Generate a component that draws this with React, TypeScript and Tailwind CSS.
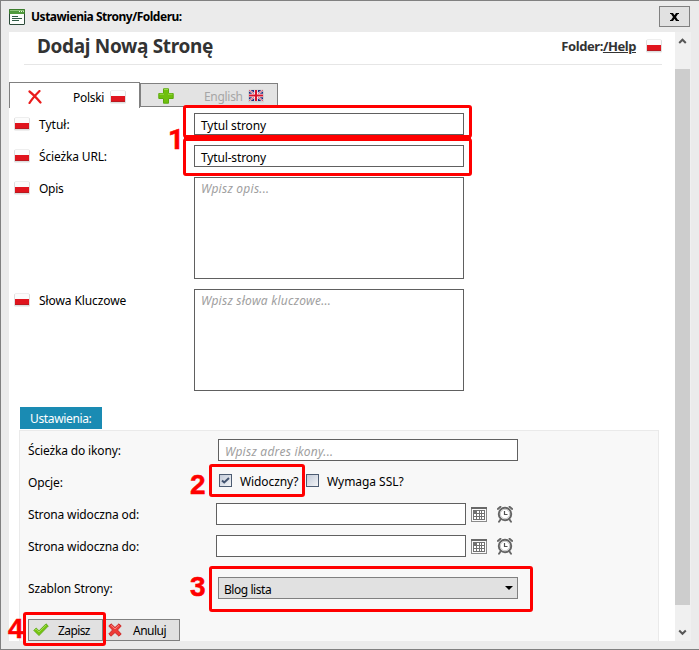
import React from 'react';
import clsx from 'clsx';

const PolishFlag: React.FC<{ className?: string }> = ({ className }) => (
  <svg width="16" height="14" viewBox="0 0 16 14" className={clsx('shrink-0', className)}>
    <rect x="0" y="0.5" width="16" height="13" rx="1.5" fill="#dedede" />
    <rect x="1" y="1" width="14" height="6" rx="0.5" fill="#fcfcfc" />
    <rect x="1" y="6" width="14" height="6" fill="#e0141d" />
    <rect x="1" y="11" width="14" height="1" fill="#b81a20" />
  </svg>
);

const BritishFlag: React.FC = () => (
  <svg width="16" height="14" viewBox="0 0 16 14" className="shrink-0">
    <rect x="0" y="0.5" width="16" height="13" rx="1.5" fill="#cfcfcf" />
    <rect x="1" y="1" width="14" height="11" fill="#1f2d7c" />
    <path d="M1 1 L15 12 M15 1 L1 12" stroke="#f4f0f4" strokeWidth="2" />
    <path d="M1 1 L15 12 M15 1 L1 12" stroke="#d0263c" strokeWidth="0.8" />
    <path d="M8 1 V12 M1 6.5 H15" stroke="#fff" strokeWidth="3.6" />
    <path d="M8 1 V12 M1 6.5 H15" stroke="#d8142c" strokeWidth="2" />
  </svg>
);

const WindowIcon: React.FC = () => (
  <svg width="16" height="16" viewBox="0 0 16 16" className="shrink-0">
    <rect x="0.5" y="0.5" width="15" height="15" rx="0.5" fill="#fbfdfb" stroke="#2b4a38" />
    <path d="M.5 5V.500h15V5" fill="none" stroke="#3c7d2c" />
    <rect x="1" y="1" width="14" height="4" fill="#4f9a3c" />
    <rect x="1" y="1" width="14" height="1" fill="#8cc47a" />
    <path d="M10 2.5h1M12 2.5h1M14 2.5h.8" stroke="#e8f6e2" />
    <path d="M3 7.5h6M3 9.500h10M3 11.500h7" stroke="#2f5b45" />
  </svg>
);

const RedCross: React.FC = () => (
  <svg width="14" height="14" viewBox="0 0 14 14" className="shrink-0">
    <path d="M1.500 1.500C5 4 9 8.500 12.500 12.500M11.500 1C8 4.500 4 9 1.500 13" fill="none" stroke="#ea1b1b" strokeWidth="2.2" strokeLinecap="round" />
  </svg>
);

const GreenPlus: React.FC = () => (
  <svg width="16" height="16" viewBox="0 0 16 16" className="shrink-0">
    <path d="M5.500 .8h5v4.700h4.700v5h-4.700v4.700h-5v-4.700H.8v-5h4.700z" fill="#6fc00e" stroke="#5ca80e" strokeLinejoin="round" />
    <path d="M6 1.500h4M1.500 6.200h4.500M10 6.200h4.500" stroke="#98da49" />
  </svg>
);

const CheckIcon: React.FC = () => (
  <svg width="16" height="14" viewBox="0 0 16 14" className="shrink-0">
    <path d="M.8 7.400 3.200 5 6 7.800 13 .8 15.300 3 6 12.600z" fill="#76c510" stroke="#58a318" strokeWidth=".8" strokeLinejoin="round" />
    <path d="M2 7.200 3.200 6 6 9 13 2" fill="none" stroke="#a6df5b" strokeWidth=".9" />
  </svg>
);

const CancelIcon: React.FC = () => (
  <svg width="14" height="14" viewBox="0 0 14 14" className="shrink-0">
    <path d="M3 .8 7 4.500 11 .8 13.200 3 9.500 7l3.700 4-2.200 2.200L7 9.500l-4 3.700L.8 11l3.700-4L.8 3z" fill="#ee3b37" stroke="#c8201f" strokeWidth=".9" strokeLinejoin="round" />
    <path d="M3 2.200 7 6l4-3.800" fill="none" stroke="#f98b86" strokeWidth=".9" />
  </svg>
);

const CalendarIcon: React.FC = () => (
  <svg width="16" height="16" viewBox="0 0 16 16" className="shrink-0">
    <rect x="0.500" y="2.500" width="15" height="13" fill="#fafafa" stroke="#8a8a8a" />
    <rect x="0" y="1" width="16" height="2" fill="#686868" />
    <rect x="2" y="4" width="12" height="10" fill="#717171" />
    <path d="M6 6h2M9 6h1M11 6h2M3 9h2M6 9h2M9 9h1M11 9h2M3 12h2M6 12h2M9 12h1M11 12h2" stroke="#fff" strokeWidth="2" />
  </svg>
);

const AlarmIcon: React.FC = () => (
  <svg width="16" height="17" viewBox="0 0 16 17" className="block shrink-0">
    <path d="M.8 3 3.500 .8M12.500 .8l2.700 2.200M3.500 13.500l-1.500 2.200M12.500 13.500l1.500 2.200" stroke="#666" strokeWidth="1.900" strokeLinecap="round" />
    <circle cx="8" cy="8" r="6.200" fill="#fff" stroke="#656565" strokeWidth="2" />
    <circle cx="8" cy="8" r="4.700" fill="none" stroke="#c4c4c4" strokeWidth="1" />
    <path d="M7.500 5v3.500h3" fill="none" stroke="#505050" strokeWidth="1.200" />
  </svg>
);

const ScrollArrow: React.FC<{ down?: boolean }> = ({ down }) => (
  <svg width="15" height="17" viewBox="0 0 15 17" className="block">
    <path d={down ? 'M4.200 6.500 7.500 9.800 10.800 6.500' : 'M4.200 11 7.500 7.700 10.800 11'} fill="none" stroke="#565656" strokeWidth="2" />
  </svg>
);

interface LabelProps {
  className?: string;
  children: React.ReactNode;
}

const FlagLabel: React.FC<LabelProps> = ({ className, children }) => (
  <div className="flex h-8 w-[180px] shrink-0 items-center gap-[9px]">
    <PolishFlag />
    <span className={clsx('pt-[2px]', className)}>{children}</span>
  </div>
);

const SettingLabel: React.FC<LabelProps> = ({ className, children }) => (
  <span className={clsx('shrink-0 pt-[2px] tracking-[-0.15px]', className)}>{children}</span>
);

const field = 'border border-[#606060] bg-white';
const placeholder = 'text-[#a0a0a0] italic tracking-[0.25px]';

interface MarkerProps {
  box: string;
  label?: string;
  labelBox?: string;
}

const Marker: React.FC<MarkerProps> = ({ box, label, labelBox }) => (
  <>
    <div className={clsx('pointer-events-none absolute rounded-[3px] border-3 border-[#ff0000]', box)} />
    {label && (
      <span className={clsx('absolute text-[28px] leading-[29px] font-bold text-[#ff0000] [-webkit-text-stroke:0.5px_#ff0000]', labelBox)}>
        {label}
      </span>
    )}
  </>
);

const App: React.FC = () => {
  return (
    <div className="relative flex h-[650px] w-[699px] flex-col overflow-hidden border-y border-l border-[#808080] bg-[#ebebeb] font-['Noto_Sans',sans-serif] text-[12px] leading-4 whitespace-nowrap text-black">
      <div className="flex h-[31px] shrink-0 items-center pr-[9px] pl-2">
        <WindowIcon />
        <span className="ml-[6px] pt-px font-bold tracking-[-0.48px]">Ustawienia Strony/Folderu:</span>
        <button className="ml-auto flex h-[21px] w-[31px] items-center justify-center border border-[#808080] bg-[#e1e1e1]">
          <svg width="9" height="8" viewBox="0 0 9 8">
            <path d="M0 0h3l1.500 2.300L6 0h3v1H8L6 4l2 3h1v1H6L4.500 5.700 3 8H0V7h1l2-3L1 1H0z" />
          </svg>
        </button>
      </div>

      <div className="ml-2 flex h-[609px] w-[682px] shrink-0">
        <div className="w-[666px] bg-white">
          <div className="ml-[15px] flex h-[33px] w-[638px] items-center border-b border-[#e6e6e6] pb-[4px] text-[#333]">
            <h1 className="ml-[13px] text-[19px] font-bold tracking-[-0.33px]">Dodaj Nową Stronę</h1>
            <span className="ml-auto text-[13px] font-bold tracking-[-0.42px]">
              Folder:<a className="underline">/Help</a>
            </span>
            <PolishFlag className="ml-[10px]" />
          </div>

          <div className="mt-[17px] flex h-[26px] items-end">
            <div className="flex h-[26px] w-[131px] items-center border-x border-t border-[#808080] bg-white pt-[4px] pl-[18px]">
              <span className="mb-[2px]"><RedCross /></span>
              <span className="ml-[31px] tracking-[-0.3px]">Polski</span>
              <PolishFlag className="mb-px ml-[6px]" />
            </div>
            <div className="mb-[1px] flex h-[24px] w-[138px] items-center border border-[#808080] bg-[#e3e3e3] pt-[2px] pl-[17px] text-[#a6a6a6]">
              <GreenPlus />
              <span className="mr-[5px] ml-[30px] pt-[2px] tracking-[-0.3px]">English</span>
              <BritishFlag />
            </div>
          </div>

          <div className="pl-[5px]">
            <div className="flex h-8 items-center">
              <FlagLabel>Tytuł:</FlagLabel>
              <div className={clsx(field, 'flex h-[22px] w-[270px] items-center pt-[3px] pl-[6px] tracking-[-0.08px]')}>Tytul strony</div>
            </div>
            <div className="flex h-8 items-center">
              <FlagLabel className="tracking-[-0.15px]">Ścieżka URL:</FlagLabel>
              <div className={clsx(field, 'flex h-[22px] w-[270px] items-center pt-[3px] pl-[6px] tracking-[-0.15px]')}>Tytul-strony</div>
            </div>
            <div className="flex h-[112px]">
              <FlagLabel className="tracking-[-0.3px]">Opis</FlagLabel>
              <div className={clsx(field, placeholder, 'mt-[5px] h-[102px] w-[270px] pt-[3px] pl-[6px]')}>Wpisz opis...</div>
            </div>
            <div className="flex h-[112px]">
              <FlagLabel className="tracking-[-0.1px]">Słowa Kluczowe</FlagLabel>
              <div className={clsx(field, placeholder, 'mt-[5px] h-[102px] w-[270px] pt-[3px] pl-[6px]')}>Wpisz słowa kluczowe...</div>
            </div>
          </div>

          <div className="mt-[11px] ml-[11px] flex h-[22px] w-[82px] items-center bg-[#1a8bb3] pt-[2px] pl-[10px] tracking-[-0.35px] text-white">
            Ustawienia:
          </div>
          <div className="mt-px ml-[10px] h-[211px] w-[640px] border-x border-t border-[#eaeaea] bg-[#f8f8f8] pt-[3px] pl-2">
            <div className="flex h-8 items-center">
              <SettingLabel className="w-[190px]">Ścieżka do ikony:</SettingLabel>
              <div className={clsx(field, placeholder, 'flex h-[22px] w-[300px] items-center pt-[3px] pl-[6px]')}>Wpisz adres ikony...</div>
            </div>
            <div className="flex h-8 items-center">
              <SettingLabel className="w-[191px]">Opcje:</SettingLabel>
              <span className="mb-[3px] flex size-[13px] items-center justify-center border border-[#4d5c72] bg-linear-to-br from-[#c3cbd9] to-[#f3f4f6]">
                <svg width="9" height="9" viewBox="0 0 9 9">
                  <path d="M1 4.500 3.200 6.500 8 2" fill="none" stroke="#42536f" strokeWidth="2" />
                </svg>
              </span>
              <span className="ml-2 w-[66px] tracking-[-0.1px]">Widoczny?</span>
              <span className="mb-[3px] size-[13px] border border-[#4d5c72] bg-linear-to-br from-[#c3cbd9] to-[#f3f4f6]" />
              <span className="ml-2 tracking-[-0.05px]">Wymaga SSL?</span>
            </div>
            {['Strona widoczna od:', 'Strona widoczna do:'].map((label) => (
              <div key={label} className="flex h-8 items-center">
                <SettingLabel className="w-[188px]">{label}</SettingLabel>
                <div className={clsx(field, 'mr-[5px] h-[22px] w-[250px]')} />
                <CalendarIcon />
                <span className="ml-[10px]"><AlarmIcon /></span>
              </div>
            ))}
            <div className="mt-[10px] flex h-8 items-center">
              <SettingLabel className="w-[190px]">Szablon Strony:</SettingLabel>
              <div className="flex h-[22px] w-[300px] items-center justify-between border border-[#808080] bg-[#e1e1e1] pr-[4px] pl-[5px]">
                <span className="pt-[3px] tracking-[-0.45px]">Blog lista</span>
                <svg width="8" height="4" viewBox="0 0 8 4">
                  <path d="M0 0h8L4 4z" />
                </svg>
              </div>
            </div>
            <div className="mt-[15px] flex">
              <button className="flex h-[22px] w-[75px] items-center border border-[#808080] bg-[#e1e1e1] pl-1">
                <CheckIcon />
                <span className="ml-[9px] pt-[2px] tracking-[-0.6px]">Zapisz</span>
              </button>
              <button className="flex h-[22px] w-[77px] items-center border border-[#808080] bg-[#e1e1e1] pl-1">
                <CancelIcon />
                <span className="ml-[11px] pt-[2px] tracking-[-0.5px]">Anuluj</span>
              </button>
            </div>
          </div>
        </div>

        <div className="flex w-4 flex-col bg-[#f0f0f0]">
          <div className="h-[37px]"><ScrollArrow /></div>
          <div className="h-[536px] w-[15px] bg-[#cdcdcd]" />
          <div className="flex grow items-end"><ScrollArrow down /></div>
        </div>
      </div>

      <Marker box="top-[104px] left-[182px] h-[33px] w-[289px]" />
      <Marker box="top-[137px] left-[182px] h-[38px] w-[289px]" label="1" labelBox="top-[124px] left-[167px] font-['Roboto',sans-serif]" />
      <Marker box="top-[463px] left-[208px] h-[33px] w-[96px]" label="2" labelBox="top-[469px] left-[189px] font-['Liberation_Sans',sans-serif]" />
      <Marker box="top-[565px] left-[208px] h-[46px] w-[324px]" label="3" labelBox="top-[571px] left-[189px] font-['Liberation_Sans',sans-serif]" />
      <Marker box="top-[611px] left-[22px] h-[34px] w-[83px]" label="4" labelBox="top-[613px] left-[7px] font-['Liberation_Sans',sans-serif]" />
      {/* the first two frames share one thick edge */}
      <div className="absolute top-[134px] left-[183px] h-[6px] w-[287px] bg-[#ff0000]" />
    </div>
  );
};

export default App;
